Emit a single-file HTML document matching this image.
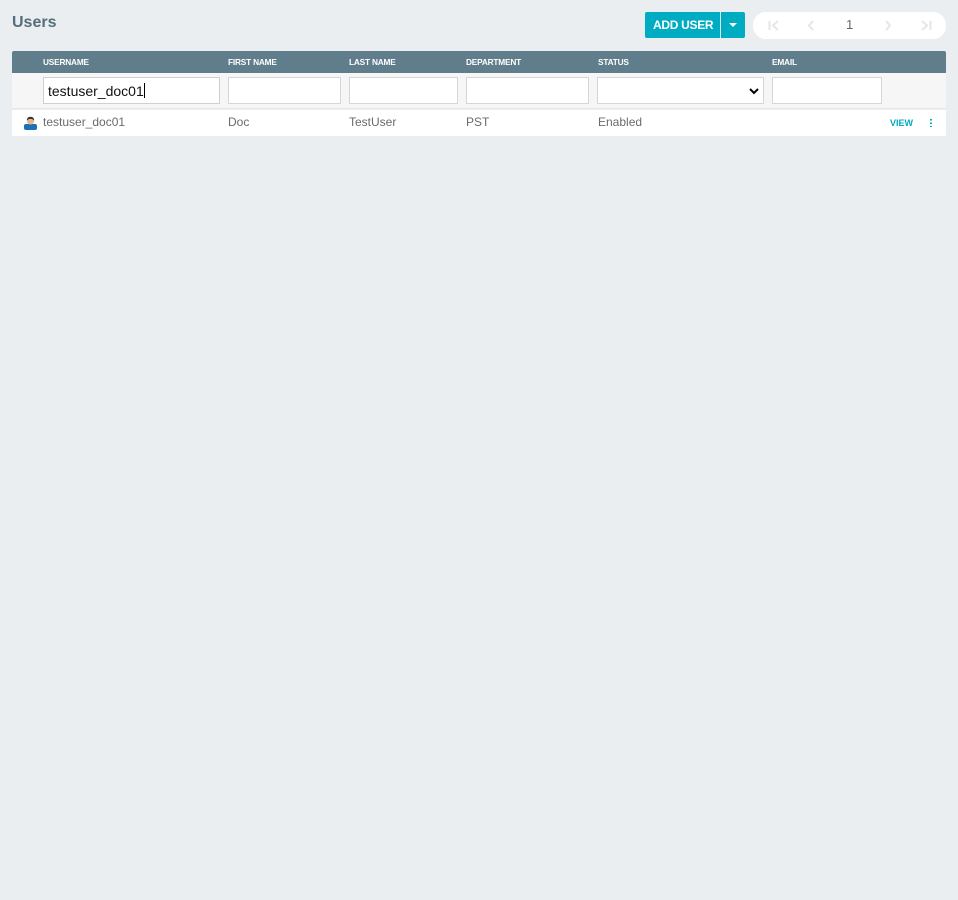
<!DOCTYPE html>
<html><head><style>
*{box-sizing:border-box;margin:0;padding:0}
body{width:958px;height:900px;background:#eaeef1;font-family:"Liberation Sans",Arial,sans-serif;position:relative;overflow:hidden}
.a{position:absolute}
h1{position:absolute;left:12px;top:14px;font-size:16px;font-weight:bold;color:#546e7a}
.btn{left:645px;top:12px;width:100px;height:26px;background:#00acc1;border-radius:2px}
.btn .t{position:absolute;left:8px;top:6px;color:#fff;font-weight:bold;font-size:12px;letter-spacing:-0.3px}
.btn .sep{position:absolute;left:75px;top:0;width:1px;height:26px;background:#e0f7fa}
.btn .car{position:absolute;left:84px;top:11px;border-left:4px solid transparent;border-right:4px solid transparent;border-top:4px solid #fff}
.pg{left:753px;top:12px;width:193px;height:27px;background:#fff;border-radius:13px}
.pg svg{position:absolute;top:8px}
.hdr{left:12px;top:51px;width:934px;height:22px;background:#607d8b;border-radius:2px 2px 0 0}
.hdr span{position:absolute;top:6px;font-size:8.3px;font-weight:bold;color:#fff;letter-spacing:-0.2px}
.flt{left:12px;top:73px;width:934px;height:36px;background:#f6f6f6;border-bottom:1px solid #e8e8e8}
.in{position:absolute;top:4px;height:27px;background:#fff;border:1px solid #d6d6d6}
.row{left:12px;top:110px;width:934px;height:26px;background:#fff;border-radius:0 0 2px 2px}
.row span{position:absolute;top:5px;font-size:12px;color:#6b6b6b}
</style></head><body>
<h1>Users</h1>
<div class="a btn"><span class="t">ADD USER</span><div class="sep"></div><div class="car"></div></div>
<div class="a pg">
<svg style="left:15px" width="12" height="11" viewBox="0 0 12 11"><path d="M1.5 1V10M10 1L5 5.5L10 10" stroke="#e6e6e6" stroke-width="2" fill="none"/></svg>
<svg style="left:54px" width="8" height="11" viewBox="0 0 8 11"><path d="M6 1L2 5.5L6 10" stroke="#e6e6e6" stroke-width="2" fill="none"/></svg>
<span style="position:absolute;left:93px;top:5px;font-size:13px;color:#5c6b60">1</span>
<svg style="left:131px" width="8" height="11" viewBox="0 0 8 11"><path d="M2 1L6 5.5L2 10" stroke="#e6e6e6" stroke-width="2" fill="none"/></svg>
<svg style="left:167px" width="12" height="11" viewBox="0 0 12 11"><path d="M10.5 1V10M2 1L7 5.5L2 10" stroke="#e6e6e6" stroke-width="2" fill="none"/></svg>
</div>
<div class="a hdr"><span style="left:31px">USERNAME</span><span style="left:216px">FIRST NAME</span><span style="left:337px">LAST NAME</span><span style="left:454px">DEPARTMENT</span><span style="left:586px">STATUS</span><span style="left:760px">EMAIL</span></div>
<div class="a flt">
<div class="in" style="left:31px;width:177px;border-color:#cfcfcf;font-size:14px;padding:5px 4px;color:#111">testuser_doc01<span style="display:inline-block;width:1px;height:15px;background:#000;vertical-align:-2px"></span></div>
<div class="in" style="left:216px;width:113px"></div>
<div class="in" style="left:337px;width:109px"></div>
<div class="in" style="left:454px;width:123px"></div>
<div class="in" style="left:585px;width:167px"><svg style="position:absolute;right:4px;top:10px" width="10" height="7" viewBox="0 0 10 7"><path d="M1 1L5 5L9 1" stroke="#000" stroke-width="2" fill="none"/></svg></div>
<div class="in" style="left:760px;width:110px"></div>
</div>
<div class="a row">
<svg style="position:absolute;left:12px;top:6px" width="13" height="14" viewBox="0 0 13 14"><rect x="0" y="8" width="13" height="6" rx="2" fill="#1e6fb5"/><circle cx="6.5" cy="5" r="3.6" fill="#e8b48c"/><path d="M2.8 4.5Q3 0.8 6.5 0.8Q10 0.8 10.2 4.5Q8 2.5 6.5 3Q5 2.5 2.8 4.5Z" fill="#333"/></svg>
<span style="left:31px">testuser_doc01</span><span style="left:216px">Doc</span><span style="left:337px">TestUser</span><span style="left:454px">PST</span><span style="left:586px">Enabled</span>
<span style="left:878px;top:8px;font-size:9px;font-weight:bold;color:#00acc1">VIEW</span>
<div style="position:absolute;left:918px;top:8px;width:2px;height:9px;background:radial-gradient(circle,#00acc1 1px,transparent 1px) 0 0/2px 3.5px"></div>
</div>
</body></html>
